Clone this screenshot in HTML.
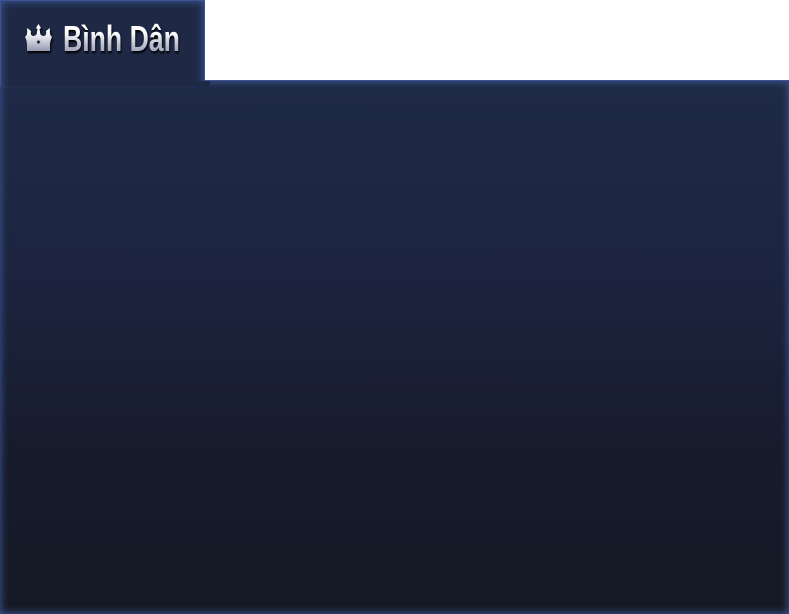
<!DOCTYPE html>
<html><head><style>
html,body{margin:0;padding:0;width:789px;height:614px;overflow:hidden;background:#fff;}
.panel{position:absolute;left:0;top:80px;width:789px;height:534px;background:linear-gradient(#1f2a46 0%,#1c2440 35%,#171b2b 70%,#161925 100%);box-shadow:inset 0 0 8px 1px #3a5490;border-top:1px solid #3b5594;box-sizing:border-box;}
.wrap{position:absolute;left:0;top:0;width:205px;height:86px;overflow:hidden;}
.tab{position:absolute;left:0;top:0;width:205px;height:300px;background:#1f2946;box-shadow:inset 0 0 8px 1px #3a5490;border:1px solid #3b5594;box-sizing:border-box;}
.fix{position:absolute;left:196px;top:81px;width:14px;height:6px;background:#1f2a46;}
.title{position:absolute;left:63px;top:18px;font:bold 36px "Liberation Sans",sans-serif;transform:scaleX(0.74);transform-origin:left top;white-space:nowrap;background:linear-gradient(#ffffff 35%,#b8bccc 65%,#8a8fa8);-webkit-background-clip:text;background-clip:text;color:transparent;filter:drop-shadow(1px 2px 1px #000);}
svg{position:absolute;left:23px;top:23px;filter:drop-shadow(1px 2px 1px #000);}
</style></head><body>
<div class="panel"></div>
<div class="wrap"><div class="tab"></div></div>
<div class="fix"></div>
<svg width="31" height="30" viewBox="0 0 31 30"><defs><linearGradient id="g" x1="0" y1="0" x2="0" y2="1"><stop offset="0.3" stop-color="#fff"/><stop offset="1" stop-color="#9498b0"/></linearGradient></defs>
<path fill="url(#g)" d="M15.5 1 L18 5 L16.5 6 L17 9 Q17 13 21 13 Q24 12 23 8 L27 5 Q26 12 29 14 Q27 18 27 22 L27 28 L4 28 L4 22 Q4 18 2 14 Q5 12 4 5 L8 8 Q7 12 10 13 Q14 13 14 9 L14.5 6 L13 5 Z"/>
<path fill="#1e2742" d="M15.5 17 l2 2 l-2 2 l-2 -2z"/></svg>
<div class="title">Bình Dân</div>
</body></html>
